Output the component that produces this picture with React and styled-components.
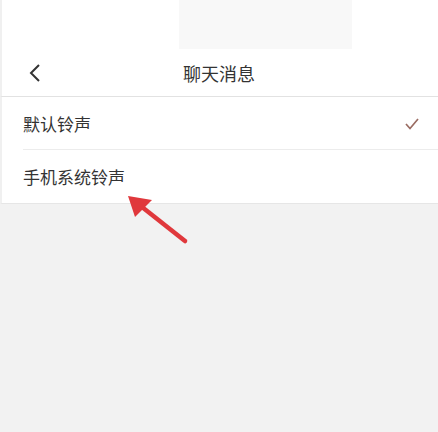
import React from "react";
import styled, { createGlobalStyle } from "styled-components";

const Global = createGlobalStyle`
  html, body { margin: 0; padding: 0; background: #f2f2f2; }
  body { font-family: "Noto Sans CJK SC", "Noto Sans", sans-serif; }
`;

const Page = styled.div`
  position: relative;
  width: 438px;
  height: 432px;
  background: #f2f2f2;
  overflow: hidden;
`;

const TopStrip = styled.div`
  height: 49px;
  background: #fff;
  display: flex;
  padding-left: 177px;
  border-left: 2px solid #f0f0f0;
`;

const GrayBlock = styled.div`
  width: 173px;
  height: 49px;
  background: #f8f8f8;
`;

const Header = styled.div`
  height: 47px;
  background: #fff;
  border-bottom: 1px solid #e2e2e2;
  border-left: 2px solid #f0f0f0;
  display: grid;
  grid-template-columns: 60px 1fr 60px;
  align-items: center;
`;

const Back = styled.div`
  display: flex;
  align-items: center;
  padding-left: 26px;
  color: #333;
`;

const Title = styled.div`
  text-align: center;
  font-size: 18px;
  color: #333;
  margin-left: -2px;
`;

const List = styled.div`
  background: #fff;
  border-left: 2px solid #f0f0f0;
  border-bottom: 1px solid #e6e6e6;
`;

const Row = styled.div`
  height: ${(p) => p.$h}px;
  display: flex;
  align-items: center;
  justify-content: space-between;
  padding: 0 18px 0 21px;
  position: relative;
  font-size: 17px;
  color: #333;
  &::after {
    content: "";
    display: ${(p) => (p.$divider ? "block" : "none")};
    position: absolute;
    left: 21px;
    right: 0;
    bottom: 0;
    height: 1px;
    background: #ececec;
  }
`;

const Arrow = styled.svg`
  position: absolute;
  left: 120px;
  top: 188px;
`;

export default function App() {
  return (
    <Page>
      <Global />
      <TopStrip>
        <GrayBlock />
      </TopStrip>
      <Header>
        <Back>
          <svg width="14" height="20" viewBox="0 0 14 20">
            <path d="M11 2 L3 10 L11 18" fill="none" stroke="#333" strokeWidth="2" />
          </svg>
        </Back>
        <Title>聊天消息</Title>
        <div />
      </Header>
      <List>
        <Row $h={53} $divider>
          <span>默认铃声</span>
          <svg width="16" height="14" viewBox="0 0 16 14">
            <path d="M2 7 L6 11.5 L14 2" fill="none" stroke="#9a6c62" strokeWidth="1.7" />
          </svg>
        </Row>
        <Row $h={53}>
          <span>手机系统铃声</span>
        </Row>
      </List>
      <Arrow width="80" height="62" viewBox="0 0 80 62">
        <path d="M65 53 L22 19" stroke="#e0383c" strokeWidth="4.5" strokeLinecap="round" />
        <polygon points="8,8 32,12 15,29" fill="#e0383c" />
      </Arrow>
    </Page>
  );
}
